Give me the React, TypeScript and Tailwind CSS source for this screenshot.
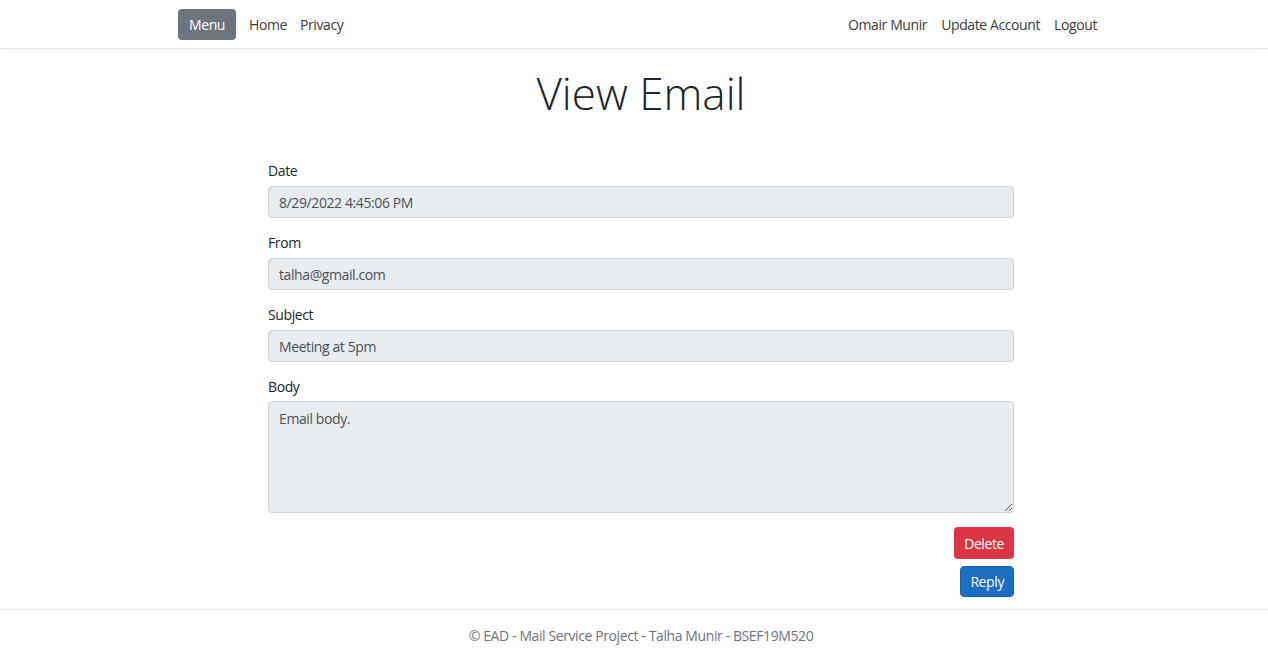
import React from "react";

const font = { fontFamily: '"Open Sans", "Noto Sans", sans-serif' };

function Field({ label, value }: { label: string; value: string }) {
  return (
    <div className="mb-[15px]">
      <label className="block text-[14px] leading-[20px] text-[#212529] mb-[5px]">{label}</label>
      <input
        readOnly
        value={value}
        className="w-full h-[32px] bg-[#e9ecef] border border-[#ced4da] rounded-[4px] px-[10px] text-[14px] tracking-[-0.4px] text-[#495057] outline-none"
      />
    </div>
  );
}

export default function App() {
  return (
    <div className="min-h-[660px] bg-white flex flex-col tracking-[-0.4px]" style={font}>
      <nav className="h-[49px] border-b border-[#e5e5e5] shadow-[0_2px_6px_rgba(0,0,0,0.05)] bg-white">
        <div className="w-[926px] mx-auto pl-[7px] h-full flex items-center justify-between">
          <div className="flex items-center">
            <button className="h-[31px] px-[11px] bg-[#6c757d] text-white rounded-[4px] text-[14px] tracking-[-0.4px]">Menu</button>
            <a className="ml-[13px] text-[14px] text-[#3c3c3c]">Home</a>
            <a className="ml-[13px] text-[14px] text-[#3c3c3c]">Privacy</a>
          </div>
          <div className="flex items-center gap-[14px] text-[14px] text-[#3c3c3c]">
            <a>Omair Munir</a>
            <a>Update Account</a>
            <a>Logout</a>
          </div>
        </div>
      </nav>

      <main className="flex-1">
        <h1 className="text-center text-[44px] font-light text-[#212529] leading-[52px] mt-[18px] pl-[14px] tracking-normal">View Email</h1>
        <div className="w-[760px] mx-auto pl-[14px] mt-[42px]">
          <Field label="Date" value="8/29/2022 4:45:06 PM" />
          <Field label="From" value="talha@gmail.com" />
          <Field label="Subject" value="Meeting at 5pm" />
          <div>
            <label className="block text-[14px] leading-[20px] text-[#212529] mb-[4px]">Body</label>
            <textarea
              readOnly
              value="Email body."
              className="w-full h-[112px] bg-[#e9ecef] border border-[#ced4da] rounded-[4px] px-[10px] py-[6px] text-[14px] tracking-[-0.4px] text-[#495057] outline-none block"
            />
          </div>
          <div className="flex flex-col items-end mt-[14px] gap-[7px]">
            <button className="h-[32px] px-[10px] bg-[#dc3545] text-white rounded-[4px] text-[14px] tracking-[-0.4px]">Delete</button>
            <button className="h-[31px] px-[9px] bg-[#1b6ec2] border border-[#1861ac] text-white rounded-[4px] text-[14px] tracking-[-0.4px]">Reply</button>
          </div>
        </div>
      </main>

      <footer className="mt-[11px] border-t border-[#e5e5e5] h-[51px] flex items-center justify-center pl-[14px] text-[14px] text-[#6c757d]">
        © EAD - Mail Service Project - Talha Munir - BSEF19M520
      </footer>
    </div>
  );
}
